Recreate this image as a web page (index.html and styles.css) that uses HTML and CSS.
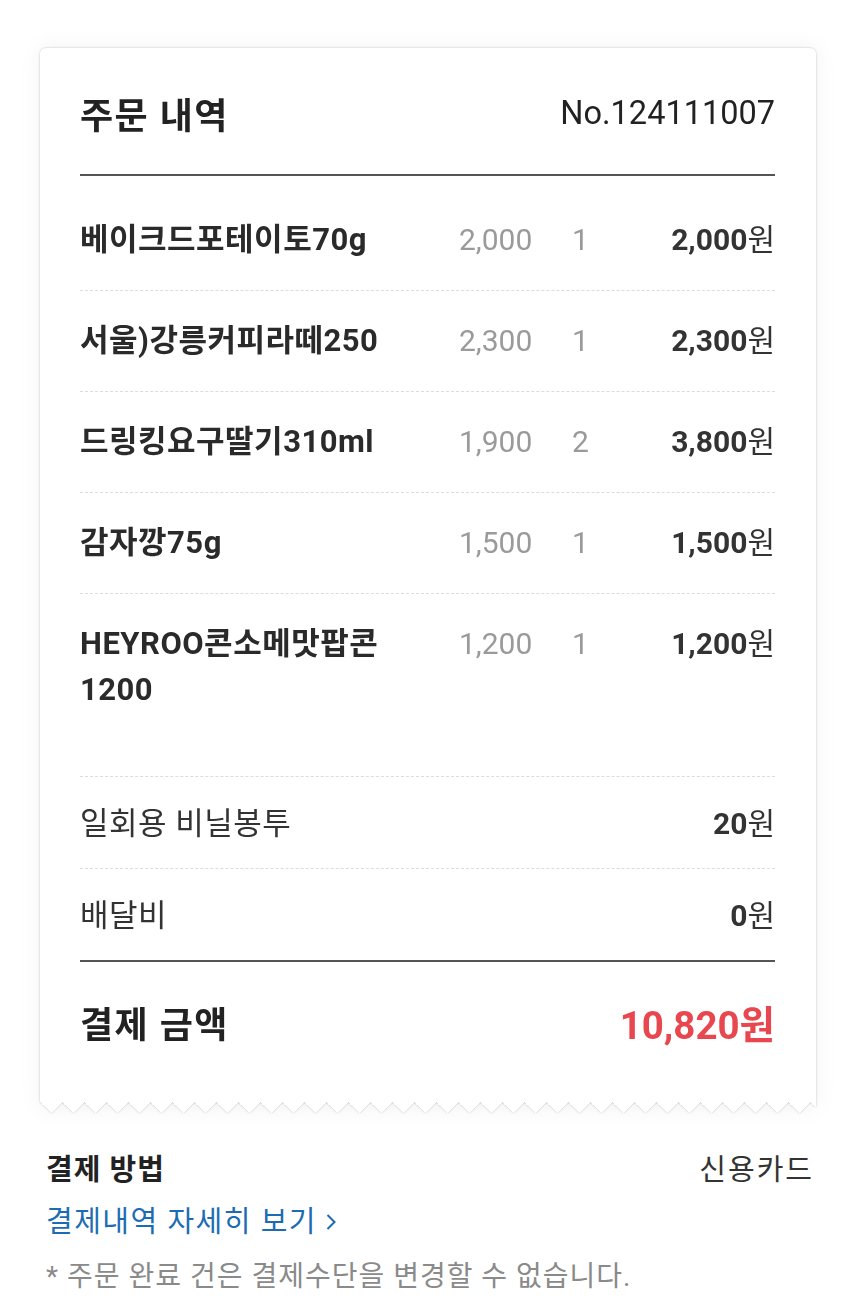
FILE: index.html
```html
<!DOCTYPE html>
<html lang="ko">
<head>
<meta charset="utf-8">
<title>주문 내역</title>
<link rel="stylesheet" href="styles.css">
</head>
<body>
<div class="page">
  <div class="receipt">
    <div class="card">
      <div class="head">
        <h1 class="title">주문 내역</h1>
        <span class="order-no">No.124111007</span>
      </div>
      <div class="items">
        <div class="item">
          <span class="name">베이크드포테이토70g</span>
          <span class="price">2,000</span>
          <span class="qty">1</span>
          <span class="sum">2,000<span class="won">원</span></span>
        </div>
        <div class="item">
          <span class="name">서울)강릉커피라떼250</span>
          <span class="price">2,300</span>
          <span class="qty">1</span>
          <span class="sum">2,300<span class="won">원</span></span>
        </div>
        <div class="item">
          <span class="name">드링킹요구딸기310ml</span>
          <span class="price">1,900</span>
          <span class="qty">2</span>
          <span class="sum">3,800<span class="won">원</span></span>
        </div>
        <div class="item">
          <span class="name">감자깡75g</span>
          <span class="price">1,500</span>
          <span class="qty">1</span>
          <span class="sum">1,500<span class="won">원</span></span>
        </div>
        <div class="item item-last">
          <span class="name">HEYROO콘소메맛팝콘1200</span>
          <span class="price">1,200</span>
          <span class="qty">1</span>
          <span class="sum">1,200<span class="won">원</span></span>
        </div>
      </div>
      <div class="fees">
        <div class="fee">
          <span class="fee-label">일회용 비닐봉투</span>
          <span class="fee-value">20<span class="won">원</span></span>
        </div>
        <div class="fee fee-last">
          <span class="fee-label">배달비</span>
          <span class="fee-value">0<span class="won">원</span></span>
        </div>
      </div>
      <div class="total">
        <span class="total-label">결제 금액</span>
        <span class="total-value">10,820<span class="won">원</span></span>
      </div>
    </div>
    <div class="zigzag"></div>
  </div>

  <div class="payment">
    <div class="pay-row">
      <span class="pay-label">결제 방법</span>
      <span class="pay-value">신용카드</span>
    </div>
    <a class="pay-link" href="#">결제내역 자세히 보기<svg class="chev" width="12" height="20" viewBox="0 0 12 20"><path d="M2.5 3 L9.5 10 L2.5 17" fill="none" stroke="#1d6cb3" stroke-width="2"/></svg></a>
    <p class="note">* 주문 완료 건은 결제수단을 변경할 수 없습니다.</p>
  </div>
</div>
</body>
</html>
```

FILE: styles.css
```css
html, body {
  margin: 0;
  padding: 0;
  background: #ffffff;
}

body {
  font-family: Roboto, "Noto Sans CJK KR", "Noto Sans", sans-serif;
  color: #333;
}

.page {
  width: 855px;
  padding-top: 48px;
}

.receipt {
  width: 776px;
  margin-left: 40px;
  filter: drop-shadow(0 0 1px rgba(0, 0, 0, 0.22)) drop-shadow(0 0 10px rgba(0, 0, 0, 0.05));
}

.card {
  background: #fff;
  border-radius: 6px 6px 0 0;
  padding: 0 41px 20px 40px;
}

.zigzag {
  height: 11px;
  background: #fff;
  -webkit-mask: conic-gradient(from 135deg at top, #0000 90deg, #000 0) 11px 0 / 22px 100%;
  mask: conic-gradient(from 135deg at top, #0000 90deg, #000 0) 11px 0 / 22px 100%;
}

.head {
  height: 122px;
  padding-top: 4px;
  display: flex;
  align-items: center;
  justify-content: space-between;
  border-bottom: 2px solid #555;
}

.title {
  margin: 0;
  font-size: 36px;
  letter-spacing: 1.5px;
  font-weight: 700;
  color: #222;
}

.order-no {
  font-size: 32.5px;
  color: #222;
}

.items {
  padding-top: 14px;
}

.item {
  display: grid;
  grid-template-columns: 379px 113px 1fr auto;
  align-items: start;
  padding: 27px 0;
  line-height: 46px;
  font-size: 30px;
  border-bottom: 1px dashed #dcdcdc;
}

.item-last {
  padding-bottom: 63px;
}

.name {
  font-size: 31px;
  letter-spacing: 0.5px;
  font-weight: 700;
  color: #2a2a2a;
  padding-right: 20px;
}

.price,
.qty {
  color: #9a9a9a;
}

.sum {
  font-weight: 700;
  color: #333;
  text-align: right;
}

.won {
  font-weight: 400;
}

.fee {
  display: flex;
  justify-content: space-between;
  padding: 24px 0 21px;
  line-height: 46px;
  font-size: 30px;
  color: #333;
  border-bottom: 1px dashed #dcdcdc;
}

.fee-label {
  font-size: 31px;
  letter-spacing: 0.5px;
}

.fee-value {
  font-weight: 700;
}

.fee-last {
  border-bottom: 2px solid #555;
}

.total {
  height: 120px;
  display: flex;
  align-items: center;
  justify-content: space-between;
}

.total-label {
  font-size: 36px;
  letter-spacing: 1.5px;
  font-weight: 700;
  color: #222;
}

.total-value {
  font-size: 38.5px;
  font-weight: 700;
  color: #e8474f;
}

.total-value .won {
  font-weight: 700;
}

.payment {
  padding: 37px 43px 0 46px;
}

.pay-row {
  display: flex;
  justify-content: space-between;
  line-height: 40px;
  font-size: 29px;
  letter-spacing: 1px;
}

.pay-label {
  font-weight: 700;
  color: #222;
}

.pay-value {
  color: #333;
  letter-spacing: 2px;
  margin-right: -2px;
}

.pay-link {
  display: flex;
  align-items: center;
  margin-top: 12px;
  line-height: 40px;
  font-size: 29px;
  letter-spacing: 1.5px;
  color: #1d6cb3;
  text-decoration: none;
}

.chev {
  margin-left: 8px;
}

.note {
  margin: 15px 0 0;
  line-height: 40px;
  font-size: 28px;
  letter-spacing: 1px;
  color: #8a8a8a;
}
```
